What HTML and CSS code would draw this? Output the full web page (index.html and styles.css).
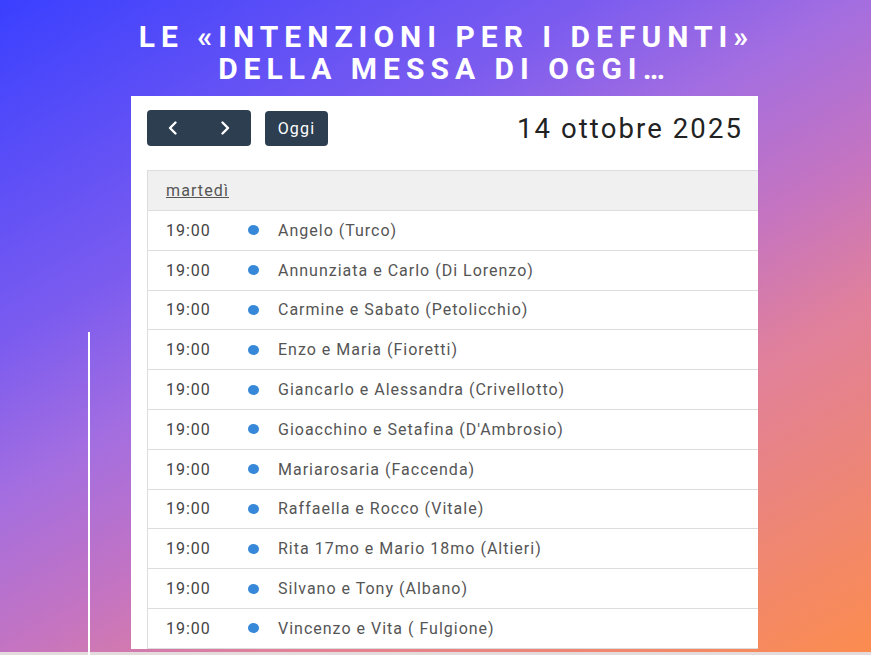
FILE: index.html
```html
<!DOCTYPE html>
<html lang="it">
<head>
<meta charset="utf-8">
<title>Intenzioni per i defunti</title>
<link rel="stylesheet" href="styles.css">
</head>
<body>
<div class="page">
  <div class="side-line"></div>
  <div class="wrap">
    <h1 class="headline">LE «INTENZIONI PER I DEFUNTI»<br>DELLA MESSA DI OGGI…</h1>
    <div class="panel">
      <div class="toolbar">
        <div class="tb-left">
          <div class="btn-group">
            <button class="btn btn-icon" aria-label="prev">
              <svg width="14" height="16" viewBox="0 0 14 16"><path d="M9.5 2.5 L4 8 L9.5 13.5" fill="none" stroke="#fff" stroke-width="2.4" stroke-linecap="round" stroke-linejoin="round"/></svg>
            </button>
            <button class="btn btn-icon" aria-label="next">
              <svg width="14" height="16" viewBox="0 0 14 16"><path d="M4.5 2.5 L10 8 L4.5 13.5" fill="none" stroke="#fff" stroke-width="2.4" stroke-linecap="round" stroke-linejoin="round"/></svg>
            </button>
          </div>
          <button class="btn btn-today">Oggi</button>
        </div>
        <h2 class="date-title">14 ottobre 2025</h2>
      </div>
      <div class="list">
        <div class="day-row"><a class="day-link">martedì</a></div>
        <div class="ev"><span class="ev-time">19:00</span><span class="ev-dot"></span><span class="ev-title">Angelo (Turco)</span></div>
        <div class="ev"><span class="ev-time">19:00</span><span class="ev-dot"></span><span class="ev-title">Annunziata e Carlo (Di Lorenzo)</span></div>
        <div class="ev"><span class="ev-time">19:00</span><span class="ev-dot"></span><span class="ev-title">Carmine e Sabato (Petolicchio)</span></div>
        <div class="ev"><span class="ev-time">19:00</span><span class="ev-dot"></span><span class="ev-title">Enzo e Maria (Fioretti)</span></div>
        <div class="ev"><span class="ev-time">19:00</span><span class="ev-dot"></span><span class="ev-title">Giancarlo e Alessandra (Crivellotto)</span></div>
        <div class="ev"><span class="ev-time">19:00</span><span class="ev-dot"></span><span class="ev-title">Gioacchino e Setafina (D'Ambrosio)</span></div>
        <div class="ev"><span class="ev-time">19:00</span><span class="ev-dot"></span><span class="ev-title">Mariarosaria (Faccenda)</span></div>
        <div class="ev"><span class="ev-time">19:00</span><span class="ev-dot"></span><span class="ev-title">Raffaella e Rocco (Vitale)</span></div>
        <div class="ev"><span class="ev-time">19:00</span><span class="ev-dot"></span><span class="ev-title">Rita 17mo e Mario 18mo (Altieri)</span></div>
        <div class="ev"><span class="ev-time">19:00</span><span class="ev-dot"></span><span class="ev-title">Silvano e Tony (Albano)</span></div>
        <div class="ev"><span class="ev-time">19:00</span><span class="ev-dot"></span><span class="ev-title">Vincenzo e Vita ( Fulgione)</span></div>
      </div>
    </div>
  </div>
  <div class="bottom-strip"></div>
</div>
</body>
</html>
```

FILE: styles.css
```css
* { box-sizing: border-box; }
html, body { margin: 0; padding: 0; }
body {
  width: 871px;
  height: 655px;
  overflow: hidden;
  font-family: Roboto, "Liberation Sans", Arial, sans-serif;
}
.page {
  position: relative;
  width: 871px;
  height: 655px;
  display: flex;
  flex-direction: column;
  background: linear-gradient(150deg, #3a40ff 0%, #7c5cef 30%, #a46ee0 43%, #c574c0 57%, #e0809c 69%, #fc8c4e 100%);
}
.side-line {
  position: absolute;
  left: 88px;
  top: 332px;
  width: 2px;
  height: 323px;
  background: #fff;
}
.wrap {
  margin-left: 131px;
  width: 627px;
  display: flex;
  flex-direction: column;
  flex: 1;
}
.headline {
  margin: 0;
  padding-top: 21px;
  height: 96px;
  text-align: center;
  color: #fff;
  font-family: Roboto, "Liberation Sans", sans-serif;
  font-weight: 700;
  font-size: 30px;
  line-height: 32px;
  letter-spacing: 6px;
  white-space: nowrap;
  text-indent: 4px;
}
.panel {
  background: #fff;
  height: 553px;
  overflow: hidden;
  padding: 14px 0 0 16px;
}
.toolbar {
  display: flex;
  align-items: center;
  justify-content: space-between;
  padding-right: 15px;
  height: 36px;
  margin-bottom: 24px;
}
.tb-left { display: flex; align-items: center; gap: 14px; }
.btn-group { display: flex; }
.btn {
  border: 0;
  background: #2c3e50;
  color: #fff;
  font-family: Roboto, "Liberation Sans", sans-serif;
  font-size: 16px;
  letter-spacing: 1.2px;
  cursor: pointer;
  display: flex;
  align-items: center;
  justify-content: center;
}
.btn-icon { width: 52px; height: 36px; padding: 0; }
.btn-group .btn-icon:first-child { border-radius: 4px 0 0 4px; }
.btn-group .btn-icon:last-child { border-radius: 0 4px 4px 0; }
.btn-today { width: 63px; height: 35px; border-radius: 4px; padding: 0; }
.date-title {
  margin: 0;
  font-weight: 400;
  font-size: 27.5px;
  color: #222;
  letter-spacing: 2.1px;
}
.list {
  width: 700px;
  border-top: 1px solid #ddd;
  border-left: 1px solid #ddd;
}
.day-row {
  background: #f0f0f0;
  height: 40px;
  border-bottom: 1px solid #ddd;
  display: flex;
  align-items: center;
  padding-left: 18px;
}
.day-link {
  color: #555;
  font-size: 16px;
  letter-spacing: 1.1px;
  text-decoration: underline;
}
.ev {
  height: 39.8px;
  display: flex;
  align-items: center;
  border-bottom: 1px solid #ddd;
  padding-left: 18px;
  font-size: 16px;
  letter-spacing: 1px;
}
.ev-time { width: 82px; color: #444; }
.ev-dot {
  width: 11px;
  height: 10px;
  border-radius: 50%;
  background: #3788d8;
  margin-right: 19px;
}
.ev-title { color: #555; }
.bottom-strip {
  height: 3px;
  background: #e4dcdc;
}
```
